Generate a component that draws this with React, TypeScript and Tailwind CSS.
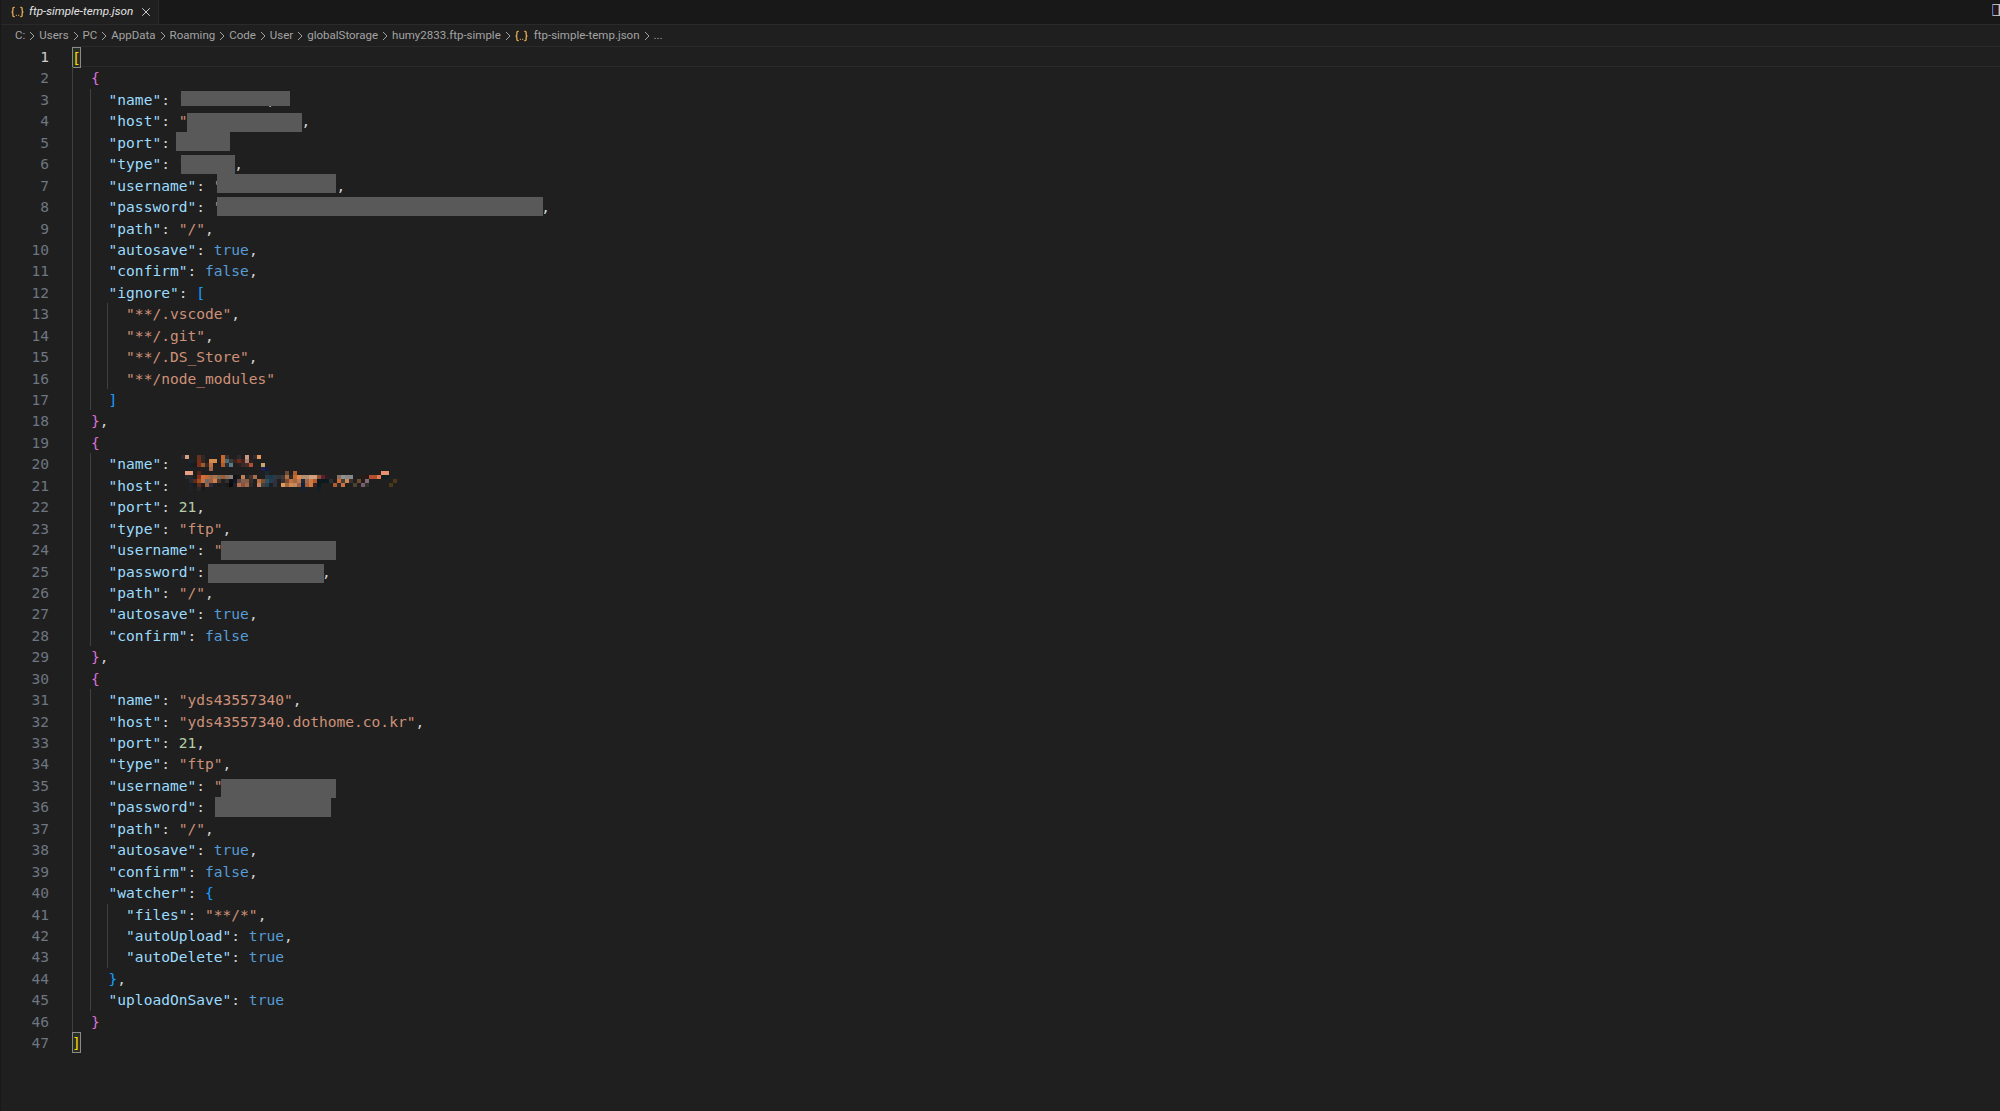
import React from "react";
import { X } from "lucide-react";

type Tok = [string, string];
type Line = { level: number; toks: Tok[] };

const tone: Record<string, string> = {
  k: "text-[#9cdcfe]",
  s: "text-[#ce9178]",
  b: "text-[#569cd6]",
  n: "text-[#b5cea8]",
  p: "text-[#d4d4d4]",
  nudge: "ml-[3px] text-[#d4d4d4]",
  pink: "text-[#da70d6]",
  blue: "text-[#179fff]",
};

const L = (level: number, ...toks: Tok[]): Line => ({ level, toks });
const kv = (level: number, key: string, ...rest: Tok[]): Line =>
  L(level, ["k", `"${key}"`], ["p", ": "], ...rest);
const c: Tok = ["p", ","];
const cn: Tok = ["nudge", ","];

const lines: Line[] = [
  L(0),
  L(1, ["pink", "{"]),
  kv(2, "name", ["s", '"         '], c),
  kv(2, "host", ["s", '"             '], c),
  kv(2, "port"),
  kv(2, "type", ["s", '"     '], cn),
  kv(2, "username", ["s", '"             '], c),
  kv(2, "password", ["s", '"                                    '], cn),
  kv(2, "path", ["s", '"/"'], c),
  kv(2, "autosave", ["b", "true"], c),
  kv(2, "confirm", ["b", "false"], c),
  kv(2, "ignore", ["blue", "["]),
  L(3, ["s", '"**/.vscode"'], c),
  L(3, ["s", '"**/.git"'], c),
  L(3, ["s", '"**/.DS_Store"'], c),
  L(3, ["s", '"**/node_modules"']),
  L(2, ["blue", "]"]),
  L(1, ["pink", "}"], c),
  L(1, ["pink", "{"]),
  kv(2, "name"),
  kv(2, "host"),
  kv(2, "port", ["n", "21"], c),
  kv(2, "type", ["s", '"ftp"'], c),
  kv(2, "username", ["s", '"'] ),
  L(2, ["k", '"password"'], ["p", ":"], ["p", "             "], cn),
  kv(2, "path", ["s", '"/"'], c),
  kv(2, "autosave", ["b", "true"], c),
  kv(2, "confirm", ["b", "false"]),
  L(1, ["pink", "}"], c),
  L(1, ["pink", "{"]),
  kv(2, "name", ["s", '"yds43557340"'], c),
  kv(2, "host", ["s", '"yds43557340.dothome.co.kr"'], c),
  kv(2, "port", ["n", "21"], c),
  kv(2, "type", ["s", '"ftp"'], c),
  kv(2, "username", ["s", '"']),
  kv(2, "password"),
  kv(2, "path", ["s", '"/"'], c),
  kv(2, "autosave", ["b", "true"], c),
  kv(2, "confirm", ["b", "false"], c),
  kv(2, "watcher", ["blue", "{"]),
  kv(3, "files", ["s", '"**/*"'], c),
  kv(3, "autoUpload", ["b", "true"], c),
  kv(3, "autoDelete", ["b", "true"]),
  L(2, ["blue", "}"], c),
  kv(2, "uploadOnSave", ["b", "true"]),
  L(1, ["pink", "}"]),
  L(0),
];

const crumbs = ["C:", "Users", "PC", "AppData", "Roaming", "Code", "User", "globalStorage", "humy2833.ftp-simple"];

const mosaic: string[] = [
  "1:2a2a35 2:d9a07e 5:6b2f1e 6:2a2a2a 11:c8682f 12:333333 15:2a2a2a 17:c49a85 18:2a1c1c 19:2d2d32 20:e89a5e",
  "3:1c2430 5:7a2d18 6:3a2520 8:d58a4e 9:d58a4e 11:c8682f 12:4a6a78 13:3a3a3a 14:3a2520 15:6b2a1a 16:442222 17:b08070 18:2a2222",
  "3:181e28 4:1a1a1a 5:7a3018 6:a05a30 7:3a2a28 8:c07040 11:b05a28 12:243038 13:5a7a88 15:2a2020 16:3a2a2a 17:442a2a 18:b05030 21:c8a868",
  "8:a06a50 21:1e2050 22:181a40",
  "2:e8a080 3:e8a080 5:5a2215 22:1a2a30 27:6a4a3a 29:b06030 51:e89070 52:e89070",
  "2:252a2e 3:252a2e 5:8a3018 6:d07040 7:c86a30 8:9a6a50 9:b07040 10:7a6a60 11:a05a30 12:8a7060 13:8a8078 14:101418 15:1a1a1a 16:c08050 17:20262e 18:4a3028 19:a07050 22:2a3a44 23:1a3a50 24:2a3a44 25:333333 26:3a3a3a 27:b07040 28:2a2a2a 29:c06a30 30:e08a50 31:b09070 32:b09070 33:d0a080 34:d0a080 35:8a5030 36:5a2030 37:301c20 40:8a7060 41:909090 42:888888 43:888888 46:281a18 47:281a18 48:b05030 49:b05030 50:e07a50 51:102020 52:102020",
  "3:2a2a2e 4:5a2a1a 5:a04a20 6:c87040 7:6a6a6e 8:a06040 9:d08050 10:503a30 11:202020 12:303030 13:101010 14:10182a 15:60483f 16:806050 17:905a40 18:303030 20:b07040 21:804a30 22:305060 23:204050 24:303040 26:3a3030 27:804a30 28:c07040 29:a06a40 30:c07a50 31:20283a 32:a06a50 33:d07a40 34:b05a30 35:0c1a20 36:0c1a20 37:0c1a20 38:303030 40:d06a30 41:404040 42:d08a50 43:3a3030 45:6a4a30 46:281c18 47:806a7a 54:4a3818",
  "3:1c2028 4:181c20 5:602818 6:202020 7:a06040 8:2a2a40 10:1c1c20 12:1a1a1a 13:0a0a0a 14:202028 15:b07050 16:8a5040 17:a06848 18:2a2a2a 20:c88060 21:404040 22:284048 23:182028 24:303038 26:e09a60 27:a06a40 28:d08a50 29:c08a60 30:a06040 31:102040 32:a06040 33:d07a40 34:3a2020 35:0a1a20 37:202020 39:b05a30 40:282828 41:c87040 44:504030 46:7a5a70 47:283028 53:4a3818",
  "3:1e2228 5:282828 6:1a1a1a 31:182030 35:102028",
];

function JsonIcon({ className }: { className: string }) {
  return (
    <svg viewBox="0 0 14 12" className={className} fill="none" stroke="#e8ab53" strokeWidth="1.4">
      <path d="M4 1H3.2C2.4 1 2 1.5 2 2.2V4.6C2 5.3 1.6 5.8 .8 6C1.6 6.2 2 6.7 2 7.4V9.8C2 10.5 2.4 11 3.2 11H4" />
      <path d="M10 1H10.8C11.6 1 12 1.5 12 2.2V4.6C12 5.3 12.4 5.8 13.2 6C12.4 6.2 12 6.7 12 7.4V9.8C12 10.5 11.6 11 10.8 11H10" />
      <path d="M5.2 9.6H6.2M7.8 9.6H8.8" strokeWidth="1.2" />
    </svg>
  );
}

function Chevron() {
  return (
    <span className="flex w-[14px] shrink-0 justify-center">
      <svg width="6" height="10" viewBox="0 0 6 10" fill="none" stroke="#a0a0a0" strokeWidth="1">
        <path d="M1 1L5 5L1 9" />
      </svg>
    </span>
  );
}

function Box({ children }: { children: React.ReactNode }) {
  return (
    <span className="flex h-[21px] w-[9px] items-center justify-center border border-[#8a8a8a] bg-[#2a2f24] text-[#ffd700]">
      {children}
    </span>
  );
}

function Redact({ className }: { className: string }) {
  return <div className={`absolute bg-[#595959] ${className}`} />;
}

export default function App() {
  return (
    <div className="relative flex h-[1111px] w-full flex-col overflow-hidden border-l border-[#181818] bg-[#1f1f1f] font-['Roboto','Noto_Sans',sans-serif]">
      <div className="flex h-[25px] shrink-0 items-stretch justify-between border-b border-[#2a2a2a] bg-[#181818]">
        <div className="flex w-[158px] items-center border-r border-[#2a2a2a] bg-[#1f1f1f] pl-[10px]">
          <JsonIcon className="h-[12px] w-[13px] shrink-0" />
          <span className="ml-[5px] text-[11.7px] italic text-[#e4e4e4]">ftp-simple-temp.json</span>
          <X size={14} strokeWidth={1.6} className="ml-[6px] shrink-0 text-[#d8d8d8]" />
        </div>
        <svg width="8" height="12" viewBox="0 0 8 12" className="mt-[4px]">
          <rect x="0" y="0" width="8" height="12" fill="#2a1416" />
          <rect x="0" y="0" width="1.2" height="12" fill="#4a78c8" />
          <rect x="1" y="0" width="7" height="1" fill="#b8b8b8" />
          <rect x="1" y="11" width="7" height="1" fill="#b8b8b8" />
          <rect x="6.6" y="0" width="1.4" height="12" fill="#b8c4cc" />
        </svg>
      </div>

      <div className="flex h-[21px] shrink-0 items-center pl-[14px] text-[11.5px] text-[#a3a3a3]">
        {crumbs.map((t) => (
          <React.Fragment key={t}>
            <span>{t}</span>
            <Chevron />
          </React.Fragment>
        ))}
        <JsonIcon className="h-[12px] w-[13px] shrink-0" />
        <span className="ml-[6px]">ftp-simple-temp.json</span>
        <Chevron />
        <span>...</span>
      </div>

      <div className="flex flex-col font-['DejaVu_Sans_Mono',monospace] text-[14.57px] leading-[21.44px]">
        {lines.map((line, i) => (
          <div key={i} className="flex h-[21.44px] items-stretch whitespace-pre">
            <div
              className={
                i === 0
                  ? "w-[48px] shrink-0 text-right text-[#cccccc]"
                  : "w-[48px] shrink-0 text-right text-[#6e7681]"
              }
            >
              {i + 1}
            </div>
            <div
              className={
                i === 0
                  ? "ml-[23px] flex min-w-0 flex-1 items-stretch border-y border-[#2a2a2a]"
                  : "ml-[23px] flex min-w-0 flex-1 items-stretch"
              }
            >
              {(i === 0 || i === 46) && <Box>{i === 0 ? "[" : "]"}</Box>}
              {Array.from({ length: line.level }).map((_, g) => (
                <span key={g} className="w-[17.54px] shrink-0 border-l border-[#404040]" />
              ))}
              <span className="pl-[1.5px]">
                {line.toks.map(([t, text], j) => (
                  <span key={j} className={tone[t]}>
                    {text}
                  </span>
                ))}
              </span>
            </div>
          </div>
        ))}
      </div>

      <Redact className="left-[180px] top-[91px] h-[15px] w-[109px]" />
      <Redact className="left-[186px] top-[113px] h-[19px] w-[115px]" />
      <Redact className="left-[175px] top-[132px] h-[19px] w-[54px]" />
      <Redact className="left-[180px] top-[155px] h-[19px] w-[54px]" />
      <Redact className="left-[216px] top-[174px] h-[19px] w-[119px]" />
      <Redact className="left-[216px] top-[197px] h-[19px] w-[326px]" />
      <Redact className="left-[220px] top-[541px] h-[19px] w-[115px]" />
      <Redact className="left-[207px] top-[564px] h-[19px] w-[116px]" />
      <Redact className="left-[220px] top-[779px] h-[19px] w-[115px]" />
      <Redact className="left-[214px] top-[797px] h-[20px] w-[116px]" />

      <svg width="224" height="40" viewBox="0 0 224 40" className="absolute left-[176px] top-[455px]">
        {mosaic.map((row, r) =>
          row.split(" ").map((cell) => {
            const [col, color] = cell.split(":");
            return <rect key={`${r}-${col}`} x={Number(col) * 4} y={r * 4} width="4" height="4" fill={`#${color}`} />;
          })
        )}
      </svg>
    </div>
  );
}
